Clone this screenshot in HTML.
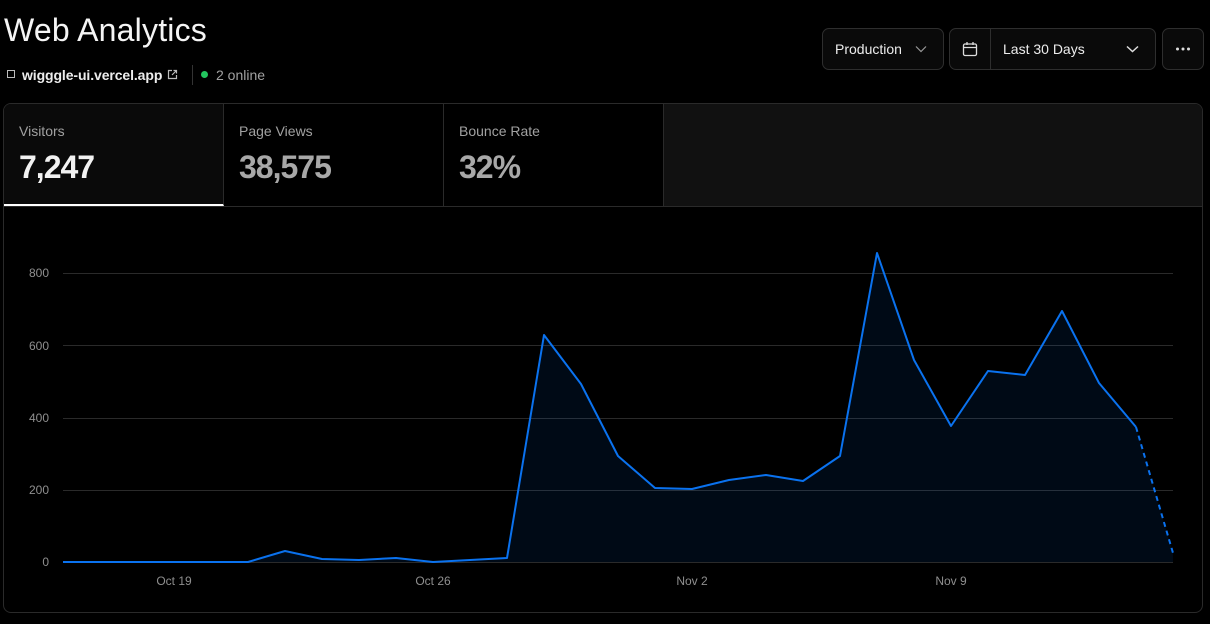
<!DOCTYPE html>
<html><head><meta charset="utf-8"><style>
*{box-sizing:border-box;margin:0;padding:0}
body{width:1210px;height:624px;background:#000;color:#ededed;font-family:"Liberation Sans",sans-serif;position:relative;overflow:hidden}
.t{position:absolute;left:4px;top:12px;font-size:32px;letter-spacing:0.2px;color:#f5f5f5}
.sub{position:absolute;top:67px;font-size:14px}
.btn{position:absolute;top:28px;height:42px;border:1px solid #2e2e2e;border-radius:7px;background:#0a0a0a;font-size:14px;color:#ededed;display:flex;align-items:center}
.card{position:absolute;left:3px;top:103px;width:1200px;height:510px;border:1px solid #2a2a2a;border-radius:8px;overflow:hidden;background:#000}
.tabs{height:103px;border-bottom:1px solid #2a2a2a;display:flex;background:#111}
.tab{width:220px;border-right:1px solid #2a2a2a;padding:19px 15px;background:#000}
.tab .l{font-size:14px;color:#a1a1a1}
.tab .v{font-size:32px;font-weight:bold;letter-spacing:-1px;margin-top:10px;color:#a8a8a8}
</style></head><body>
<div class="t">Web Analytics</div>
<div class="sub" style="left:7px;top:70px;width:8px;height:8px;border:1px solid #bbb"></div>
<div class="sub" style="left:22px;font-weight:bold;color:#ededed;letter-spacing:-0.1px">wigggle-ui.vercel.app</div>
<svg style="position:absolute;left:167px;top:69px" width="11" height="11" viewBox="0 0 11 11" fill="none" stroke="#bbb" stroke-width="1.2"><path d="M5 1.5H1.5v8h8V6M6.5 1.5h3v3M9.5 1.5 5 6"/></svg>
<div style="position:absolute;left:192px;top:65px;width:1px;height:20px;background:#333"></div>
<div style="position:absolute;left:201px;top:71px;width:7px;height:7px;border-radius:50%;background:#22c55e"></div>
<div class="sub" style="left:216px;color:#a1a1a1">2 online</div>
<div class="btn" style="left:822px;width:122px;padding-left:12px">Production<svg style="margin-left:13px" width="12" height="8" viewBox="0 0 12 8" fill="none" stroke="#999" stroke-width="1.2"><path d="M1 1.5l5 5 5-5"/></svg></div>
<div class="btn" style="left:949px;width:207px"><div style="width:41px;height:100%;border-right:1px solid #2e2e2e;display:flex;align-items:center;justify-content:center"><svg width="16" height="16" viewBox="0 0 16 16" fill="none" stroke="#ddd" stroke-width="1.3"><rect x="1.5" y="3" width="13" height="11.5" rx="1.5"/><path d="M1.5 6.5h13M5 1v3M11 1v3"/></svg></div><span style="margin-left:12px">Last 30 Days</span><svg style="margin-left:41px" width="13" height="8" viewBox="0 0 13 8" fill="none" stroke="#ddd" stroke-width="1.5"><path d="M1 1.5l5.5 5 5.5-5"/></svg></div>
<div class="btn" style="left:1162px;width:42px;justify-content:center"><svg width="16" height="4"><circle cx="2.5" cy="2" r="1.5" fill="#ddd"/><circle cx="8" cy="2" r="1.5" fill="#ddd"/><circle cx="13.5" cy="2" r="1.5" fill="#ddd"/></svg></div>
<div class="card">
<div class="tabs">
<div class="tab" style="background:#0a0a0a;border-bottom:2px solid #fff"><div class="l">Visitors</div><div class="v" style="color:#f2f2f2">7,247</div></div>
<div class="tab"><div class="l">Page Views</div><div class="v">38,575</div></div>
<div class="tab"><div class="l">Bounce Rate</div><div class="v">32%</div></div>
</div>
</div>
<svg style="position:absolute;left:0;top:0" width="1210" height="624" font-family="Liberation Sans" font-size="12" fill="#8f8f8f">
<g stroke="#2a2a2a" stroke-width="1"><path d="M63 273.5H1173M63 345.5H1173M63 418.5H1173M63 490.5H1173M63 562.5H1173"/></g>
<g text-anchor="end"><text x="49" y="277">800</text><text x="49" y="350">600</text><text x="49" y="422">400</text><text x="49" y="494">200</text><text x="49" y="566">0</text></g>
<g text-anchor="middle"><text x="174" y="585">Oct 19</text><text x="433" y="585">Oct 26</text><text x="692" y="585">Nov 2</text><text x="951" y="585">Nov 9</text></g>
<path d="M63 562L248 562L285 551L322 559L359 560L396 558L433 562L470 560L507 558L544 335L581 384L618 456L655 488L692 489L729 480L766 475L803 481L840 456L877 253L914 360L951 426L988 371L1025 375L1062 311L1099 383L1136 427L1173 553L1173 562Z" fill="#0070f3" fill-opacity="0.09"/>
<path d="M63 562L248 562L285 551L322 559L359 560L396 558L433 562L470 560L507 558L544 335L581 384L618 456L655 488L692 489L729 480L766 475L803 481L840 456L877 253L914 360L951 426L988 371L1025 375L1062 311L1099 383L1136 427" fill="none" stroke="#0a72ef" stroke-width="2" stroke-linejoin="round"/>
<path d="M1136 427L1173 553" fill="none" stroke="#0a72ef" stroke-width="2" stroke-dasharray="5 4"/>
</svg>
</body></html>
